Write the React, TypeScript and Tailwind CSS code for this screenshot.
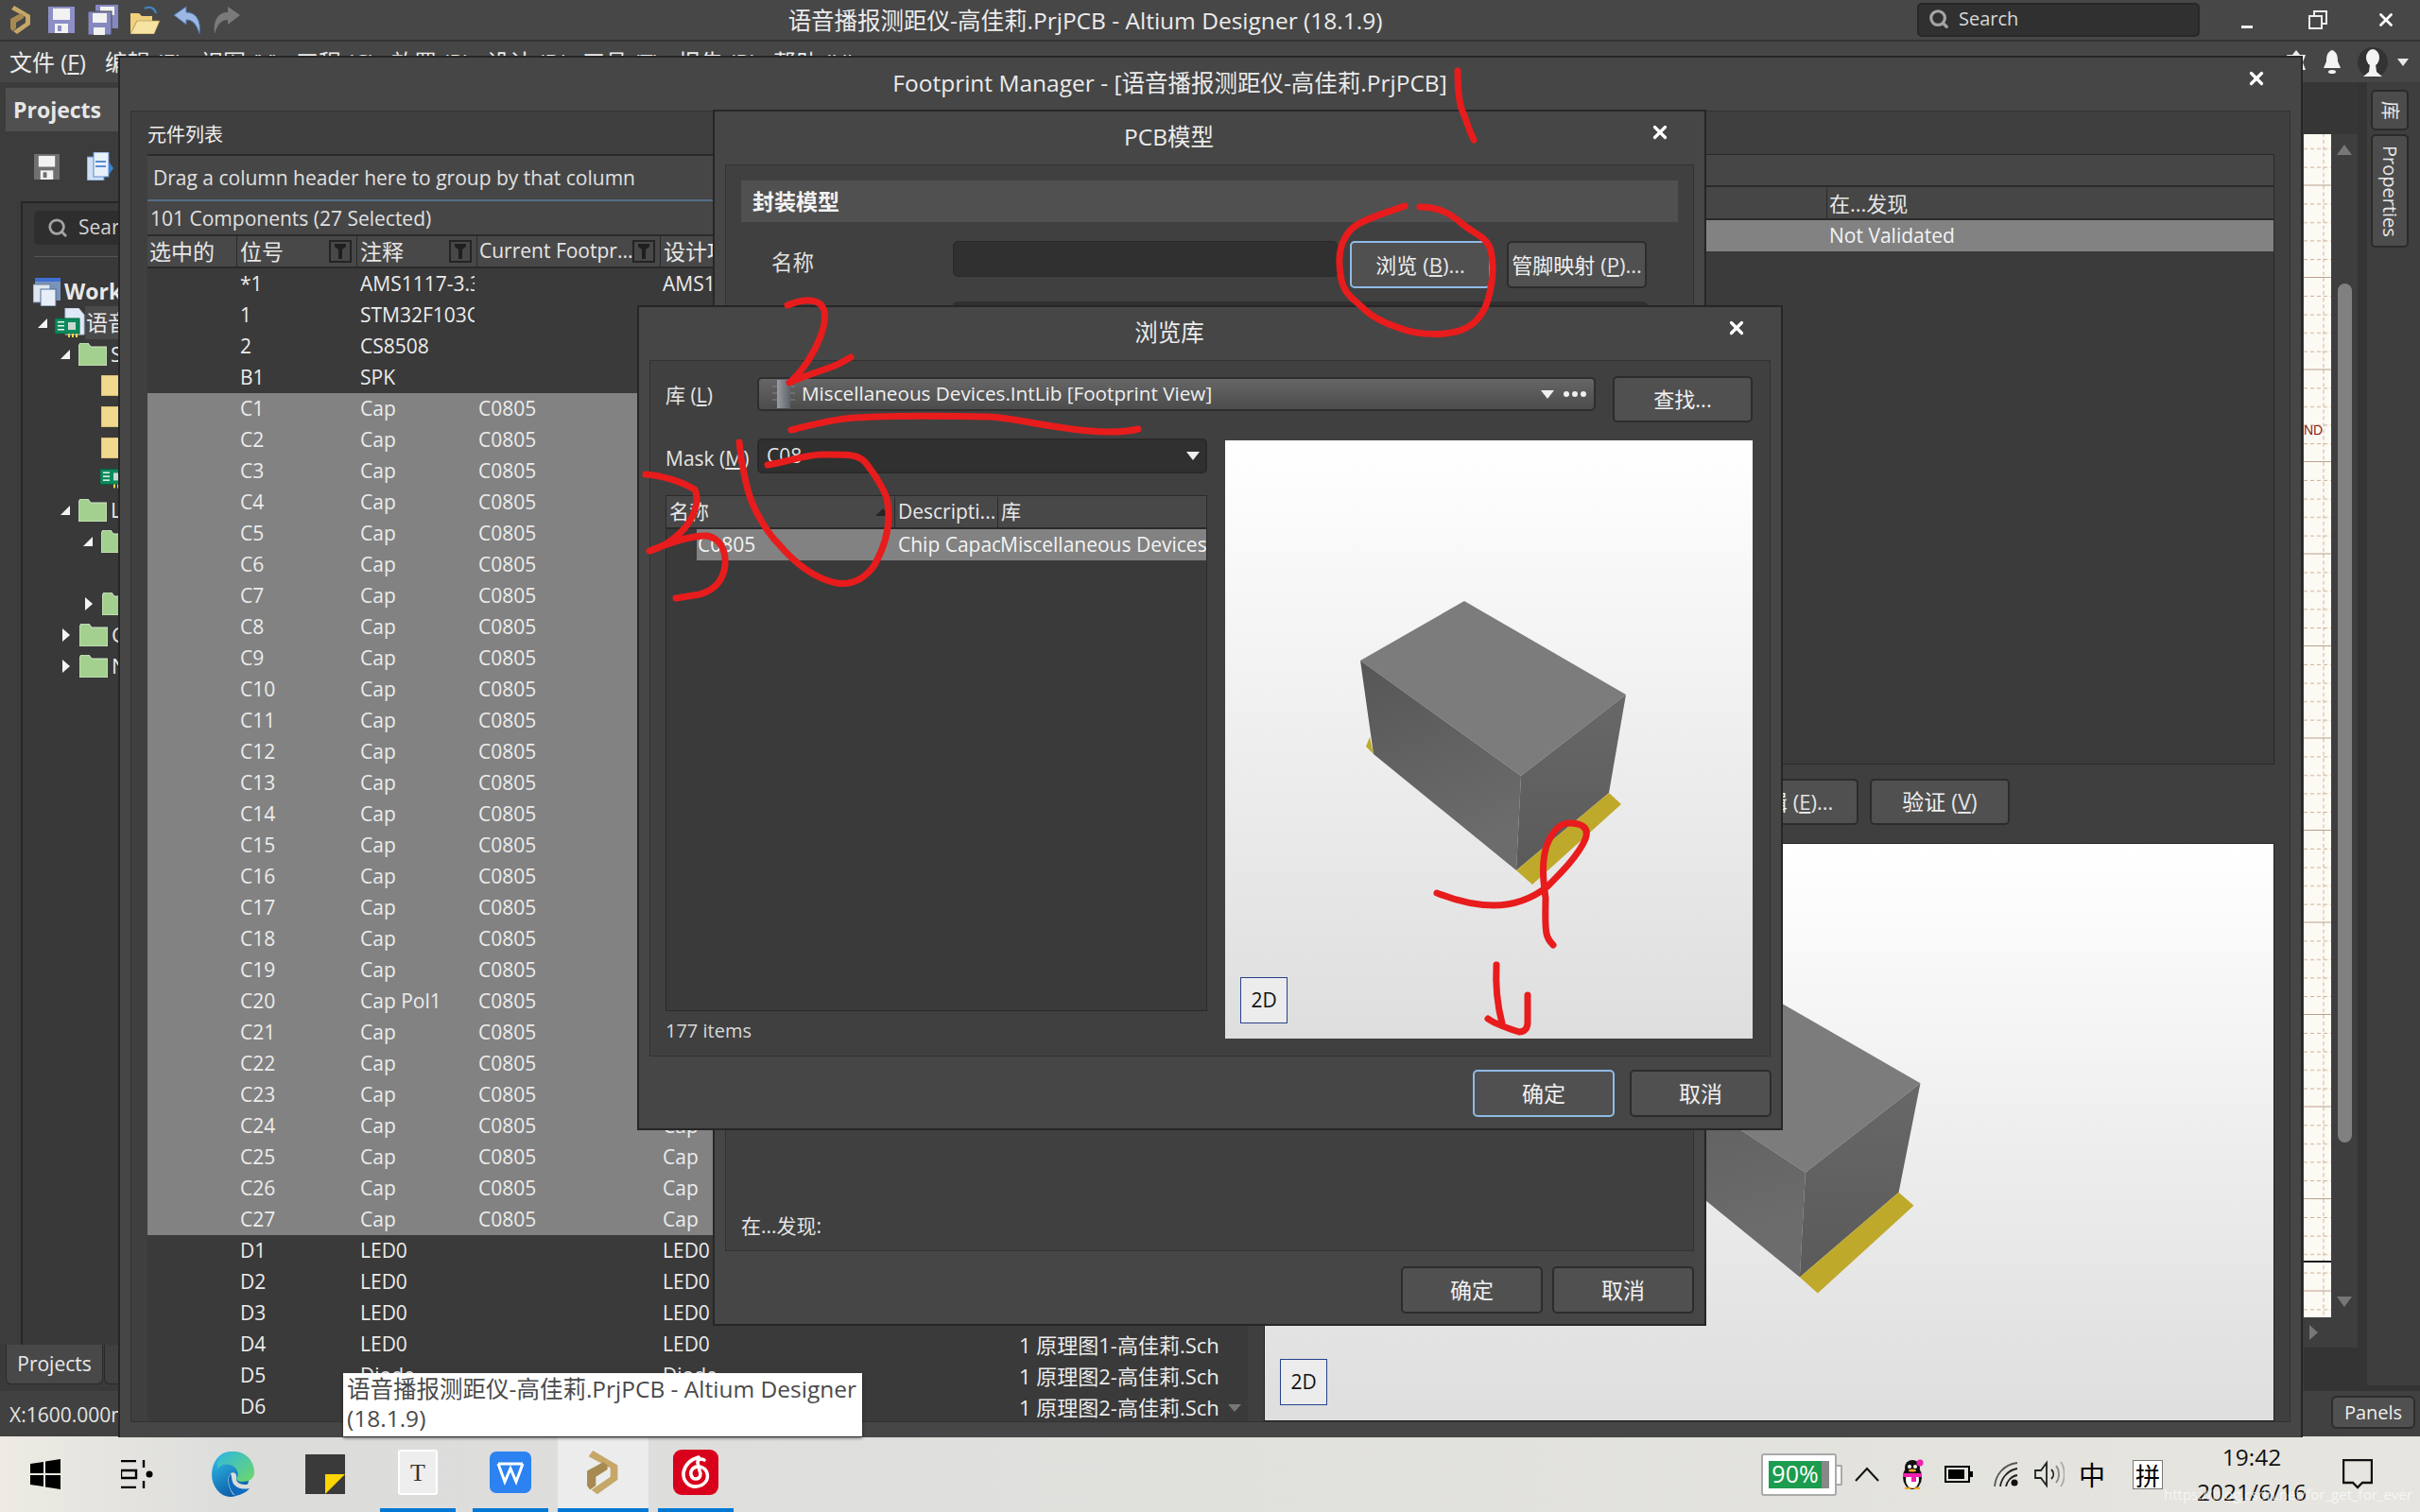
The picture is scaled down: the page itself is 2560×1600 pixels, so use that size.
import { Search, X } from "lucide-react";

type Row = { ref: string; comment: string; foot: string; design: string; sheet: string };

const sheet1 = "1 原理图1-高佳莉.Sch";
const sheet2 = "1 原理图2-高佳莉.Sch";

const rows: Row[] = [
  { ref: "*1", comment: "AMS1117-3.3", foot: "", design: "AMS1117", sheet: sheet1 },
  { ref: "1", comment: "STM32F103C8", foot: "", design: "", sheet: sheet1 },
  { ref: "2", comment: "CS8508", foot: "", design: "", sheet: sheet1 },
  { ref: "B1", comment: "SPK", foot: "", design: "", sheet: sheet1 },
  ...Array.from({ length: 27 }, (_, i) => ({
    ref: `C${i + 1}`,
    comment: i === 19 ? "Cap Pol1" : "Cap",
    foot: "C0805",
    design: "Cap",
    sheet: sheet1,
  })),
  { ref: "D1", comment: "LED0", foot: "", design: "LED0", sheet: sheet1 },
  { ref: "D2", comment: "LED0", foot: "", design: "LED0", sheet: sheet1 },
  { ref: "D3", comment: "LED0", foot: "", design: "LED0", sheet: sheet1 },
  { ref: "D4", comment: "LED0", foot: "", design: "LED0", sheet: sheet1 },
  { ref: "D5", comment: "Diode", foot: "", design: "Diode", sheet: sheet2 },
  { ref: "D6", comment: "Diode", foot: "", design: "Diode", sheet: sheet2 },
];

const menus = [
  ["文件", "F"],
  ["编辑", "E"],
  ["视图", "V"],
  ["工程", "C"],
  ["放置", "P"],
  ["设计", "D"],
  ["工具", "T"],
  ["报告", "R"],
  ["帮助", "H"],
];

function AltiumLogo({ size = 22 }: { size?: number }) {
  return (
    <svg width={size} height={size * 1.36} viewBox="0 0 22 30">
      <path d="M4 0 L21 10 L21 20 L7 30 L3 27 L16 18 L16 12 L1 4Z" fill="#c6a768" />
      <path d="M0 14 L11 8 L14 10 L14 13 L6 18 L6 24 L2 27 L0 24Z" fill="#a68a52" />
    </svg>
  );
}

function Floppy({ w = 28, color = "#8d8fc6" }: { w?: number; color?: string }) {
  return (
    <svg width={w} height={w} viewBox="0 0 28 28">
      <rect width="28" height="28" fill={color} />
      <rect x="5" y="2" width="18" height="12" fill="#f2f2f2" />
      <rect x="7" y="18" width="14" height="10" fill="#f2f2f2" />
      <rect x="10" y="20" width="4" height="6" fill={color} />
    </svg>
  );
}

function SaveAll() {
  return (
    <svg width="32" height="32" viewBox="0 0 32 32">
      <rect x="8" y="0" width="24" height="25" fill="#8688c0" />
      <rect x="13" y="2" width="15" height="9" fill="#f2f2f2" />
      <rect x="0" y="7" width="25" height="25" fill="#8688c0" stroke="#474747" />
      <rect x="5" y="9" width="15" height="10" fill="#f2f2f2" />
      <rect x="6" y="24" width="12" height="8" fill="#f2f2f2" />
    </svg>
  );
}

function Triangle({ open }: { open: boolean }) {
  return open ? (
    <svg width="10" height="10" viewBox="0 0 10 10" className="shrink-0">
      <polygon points="10,0 10,10 0,10" fill="#f4f4f4" />
    </svg>
  ) : (
    <svg width="8" height="14" viewBox="0 0 8 14" className="shrink-0 mx-px">
      <polygon points="0,0 8,7 0,14" fill="#f4f4f4" />
    </svg>
  );
}

function Folder() {
  return (
    <svg width="30" height="24" viewBox="0 0 30 24" className="shrink-0">
      <path d="M0 24 V3 L2 0 H10 L13 4 H30 V24Z" fill="#a3d08f" stroke="#d6e9cd" strokeWidth="1" />
    </svg>
  );
}

function YellowDoc() {
  return (
    <svg width="20" height="22" viewBox="0 0 20 22" className="shrink-0">
      <rect width="20" height="22" fill="#f0d98c" stroke="#c4a860" />
      <rect x="18" y="13" width="3" height="6" fill="#8a7a50" />
    </svg>
  );
}

function GreenBoard({ w = 26 }: { w?: number }) {
  return (
    <svg width={w} height={w * 0.8} viewBox="0 0 26 20" className="shrink-0">
      <rect width="26" height="16" fill="#0c8a5c" stroke="#04603e" />
      <rect x="3" y="3" width="7" height="1.5" fill="#e8f5ee" />
      <rect x="3" y="7" width="7" height="1.5" fill="#e8f5ee" />
      <rect x="3" y="11" width="7" height="1.5" fill="#e8f5ee" />
      <rect x="14" y="4" width="8" height="8" fill="#c9d9d2" />
      <rect x="14" y="16" width="2" height="4" fill="#e9d84c" />
      <rect x="18" y="16" width="2" height="4" fill="#e9d84c" />
      <rect x="22" y="16" width="2" height="4" fill="#e9d84c" />
    </svg>
  );
}

function PcbProject() {
  return (
    <svg width="32" height="32" viewBox="0 0 32 32" className="shrink-0">
      <path d="M11 0 H25 L31 7 V28 H11Z" fill="#dfe8f6" stroke="#b8c8de" />
      <rect y="11" width="26" height="16" fill="#0c8a5c" stroke="#04603e" />
      <rect x="3" y="14" width="7" height="1.5" fill="#e8f5ee" />
      <rect x="3" y="18" width="7" height="1.5" fill="#e8f5ee" />
      <rect x="3" y="22" width="7" height="1.5" fill="#e8f5ee" />
      <rect x="14" y="15" width="8" height="8" fill="#c9d9d2" />
      <rect x="14" y="27" width="2" height="4" fill="#e9d84c" />
      <rect x="18" y="27" width="2" height="4" fill="#e9d84c" />
      <rect x="22" y="27" width="2" height="4" fill="#e9d84c" />
    </svg>
  );
}

function ColumnFilter() {
  return (
    <span className="flex h-[24px] w-[24px] shrink-0 items-center justify-center border-2 border-[#242424]">
      <svg width="12" height="16" viewBox="0 0 12 16">
        <path d="M0 0 H12 V3 L8 6 V16 H4 V6 L0 3Z" fill="#1f1f1f" />
      </svg>
    </span>
  );
}

function Btn({ label, u, rest, focus, className }: { label: string; u?: string; rest?: string; focus?: boolean; className: string }) {
  return (
    <button
      className={`flex items-center justify-center rounded-[5px] border-2 bg-[#505050] text-[#f0f0f0] whitespace-nowrap ${
        focus ? "border-[#8fbbe6]" : "border-[#2c2c2c]"
      } ${className}`}
    >
      {label}
      {u && (
        <span className="ml-[6px] text-[#e4e4e4]">
          (<u>{u}</u>){rest}
        </span>
      )}
    </button>
  );
}

function DialogTitle({ text }: { text: string }) {
  return (
    <div className="relative flex h-[56px] shrink-0 items-center justify-center pb-[2px] pr-[86px] text-[24.5px] text-[#ebebeb]">
      {text}
      <X size={22} strokeWidth={3.5} className="absolute right-[36px] top-[11px] text-white" />
    </div>
  );
}

function Preview({ viewBox, big }: { viewBox: string; big?: boolean }) {
  return (
    <div className="relative h-full w-full bg-linear-to-b from-white to-[#dedede]">
      <svg className="h-full w-full" viewBox={viewBox}>
        <defs>
          <linearGradient id={big ? "l1" : "l2"} x1="0" y1="0" x2="0.3" y2="1">
            <stop offset="0" stopColor="#565656" />
            <stop offset="1" stopColor="#6c6c6c" />
          </linearGradient>
          <linearGradient id={big ? "r1" : "r2"} x1="0" y1="0" x2="0" y2="1">
            <stop offset="0" stopColor="#686868" />
            <stop offset="1" stopColor="#5a5a5a" />
          </linearGradient>
        </defs>
        {big ? (
          <>
            <polygon points="1780,1001 2032,1146 1910,1241 1640,1063" fill="#7c7c7c" />
            <polygon points="1640,1063 1910,1241 1904,1352 1660,1153" fill="url(#l1)" />
            <polygon points="1910,1241 2032,1146 2009,1262 1904,1352" fill="url(#r1)" />
            <polygon points="2009,1262 2025,1276 1923,1369 1904,1352" fill="#bfa92b" />
          </>
        ) : (
          <>
            <polygon points="1445,790 1453,798 1449,780" fill="#bfa92b" />
            <polygon points="1549,636 1720,735 1609,821 1439,699" fill="#7c7c7c" />
            <polygon points="1439,699 1609,821 1604,921 1453,798" fill="url(#l2)" />
            <polygon points="1609,821 1720,735 1702,839 1604,921" fill="url(#r2)" />
            <polygon points="1702,839 1715,851 1621,936 1604,921" fill="#bfa92b" />
          </>
        )}
      </svg>
      <span
        className={`absolute flex items-center justify-center border border-[#27408b] bg-[#ececec] text-[21px] text-[#111] ${
          big ? "bottom-[16px] left-[16px] h-[49px] w-[50px]" : "bottom-[16px] left-[16px] h-[49px] w-[50px]"
        }`}
      >
        2D
      </span>
    </div>
  );
}

function TitleBar() {
  return (
    <div className="flex h-[44px] shrink-0 items-center border-b-2 border-[#333] bg-[#474747]">
      <div className="flex w-[833px] shrink-0 items-center pl-[11px]">
        <AltiumLogo />
        <span className="ml-[18px]"><Floppy /></span>
        <span className="ml-[14px]"><SaveAll /></span>
        <svg width="32" height="30" viewBox="0 0 32 30" className="ml-[12px]">
          <path d="M1 30 V8 H10 L13 11 H24 V16 H8 L1 30Z" fill="#f0d07c" />
          <path d="M1 30 L8 16 H32 L26 30Z" fill="#f7e3a2" stroke="#a88a3f" strokeWidth="0.6" />
          <path d="M16 3 C22 0 27 3 28 8" fill="none" stroke="#3f86c5" strokeWidth="2" />
        </svg>
        <svg width="30" height="30" viewBox="0 0 30 30" className="ml-[14px]">
          <path d="M1 10 L14 1 V7 C24 7 30 15 28 30 C25 20 21 15 14 15 V20Z" fill="#9bb7e4" stroke="#4d73ae" strokeWidth="1" />
        </svg>
        <svg width="30" height="30" viewBox="0 0 30 30" className="ml-[12px]">
          <path d="M29 10 L16 1 V7 C6 7 0 15 2 30 C5 20 9 15 16 15 V20Z" fill="#7a7a7a" />
        </svg>
      </div>
      <div className="w-[630px] shrink-0 whitespace-nowrap pt-[2px] text-center text-[24.5px] text-[#ececec]">
        语音播报测距仪-高佳莉.PrjPCB - Altium Designer (18.1.9)
      </div>
      <div className="ml-auto flex h-[36px] w-[299px] items-center rounded-[5px] border-2 border-[#282828] bg-[#303030] pb-[2px] pl-[10px] text-[20px] text-[#d8d8d8]">
        <Search size={22} strokeWidth={3.5} className="text-[#a4a4a4]" />
        <span className="ml-[10px]">Search</span>
      </div>
      <div className="flex w-[100px] items-center justify-center pt-[14px]">
        <span className="h-[3px] w-[12px] bg-[#eee]" />
      </div>
      <div className="flex w-[50px] items-center justify-center">
        <svg width="20" height="20" viewBox="0 0 20 20" fill="none" stroke="#eee" strokeWidth="2">
          <rect x="1" y="6" width="13" height="13" />
          <path d="M6 6 V1 H19 V14 H14" />
        </svg>
      </div>
      <div className="flex w-[83px] items-center justify-center pl-[10px]">
        <X size={22} strokeWidth={3} className="text-white" />
      </div>
    </div>
  );
}

function MenuBar() {
  return (
    <div className="flex h-[43px] shrink-0 items-center bg-[#464646] pl-[10px] text-[24px] text-[#ececec]">
      {menus.map(([name, key]) => (
        <span key={name} className="w-[101px] shrink-0 whitespace-nowrap">
          {name} (<u>{key}</u>)
        </span>
      ))}
      <div className="ml-auto flex items-center pr-[12px]">
        <svg width="24" height="26" viewBox="0 0 24 26" fill="#eee">
          <path d="M12 0 L16 5 H22 L19 13 L22 21 H16 L12 26 L8 21 H2 L5 13 L2 5 H8Z" />
        </svg>
        <svg width="22" height="26" viewBox="0 0 22 26" fill="#f4f4f4" className="ml-[15px]">
          <path d="M11 0 C16 2 17 6 17 12 L20 19 H2 L5 12 C5 6 6 2 11 0Z" />
          <ellipse cx="11" cy="23" rx="4" ry="2" />
        </svg>
        <svg width="32" height="32" viewBox="0 0 32 32" className="ml-[16px]">
          <ellipse cx="16" cy="16" rx="16" ry="16" fill="#333" />
          <ellipse cx="16" cy="11" rx="7" ry="9" fill="#f4f4f4" />
          <path d="M13 18 H19 L20 26 L26 31 H6 L12 26Z" fill="#f4f4f4" />
        </svg>
        <svg width="12" height="8" viewBox="0 0 12 8" className="ml-[10px]">
          <polygon points="0,0 12,0 6,8" fill="#e8e8e8" />
        </svg>
      </div>
    </div>
  );
}

const tree = [
  { cls: "pl-[11px]", kind: "ws" },
  { cls: "pl-[16px]", kind: "pcb" },
  { cls: "pl-[40px]", kind: "folder", open: true, text: "Source Documents" },
  { cls: "pl-[83px]", kind: "doc" },
  { cls: "pl-[83px]", kind: "doc" },
  { cls: "pl-[83px]", kind: "doc" },
  { cls: "pl-[82px]", kind: "board" },
  { cls: "pl-[40px]", kind: "folder", open: true, text: "Libraries" },
  { cls: "pl-[64px]", kind: "folder", open: true, text: "" },
  { cls: "", kind: "none" },
  { cls: "pl-[65px]", kind: "folder", open: false, text: "" },
  { cls: "pl-[41px]", kind: "folder", open: false, text: "Components" },
  { cls: "pl-[41px]", kind: "folder", open: false, text: "Nets" },
];

function LeftPanel() {
  return (
    <div className="flex w-[130px] shrink-0 flex-col overflow-hidden bg-[#3c3c3c] pt-[6px]">
      <div className="ml-[6px] flex h-[46px] shrink-0 items-center bg-[#505050] pl-[8px] text-[23px] font-bold text-[#e6e6e6]">
        Projects
      </div>
      <div className="flex h-[74px] shrink-0 items-center gap-[29px] pl-[36px]">
        <Floppy w={27} color="#6f6f6f" />
        <svg width="28" height="30" viewBox="0 0 28 30">
          <rect x="0" y="5" width="18" height="25" fill="#cfe0f4" stroke="#5a8ccc" />
          <rect x="7" y="0" width="16" height="26" fill="#e8f0fa" stroke="#5a8ccc" />
          <rect x="9" y="9" width="11" height="2" fill="#5a8ccc" />
          <rect x="9" y="14" width="11" height="2" fill="#5a8ccc" />
          <polygon points="23,10 28,17 23,24" fill="#3b82d6" />
        </svg>
      </div>
      <div className="ml-[22px] flex min-h-0 flex-1 flex-col border-l-2 border-t-2 border-[#262626] bg-[#393939] pt-[8px]">
        <div className="ml-[12px] flex h-[36px] w-[120px] shrink-0 items-center rounded-[5px] bg-[#2e2e2e] pl-[14px] text-[21px] text-[#d4d4d4]">
          <Search size={22} strokeWidth={3} className="shrink-0 text-[#a4a4a4]" />
          <span className="ml-[11px]">Search</span>
        </div>
        <div className="ml-[12px] mt-[12px] h-px shrink-0 bg-[#555]" />
        <div className="mt-[20px] flex flex-col text-[#e8e8e8]">
          {tree.map((t, i) => (
            <div key={i} className={`flex h-[33px] items-center whitespace-nowrap text-[22px] ${t.cls}`}>
              {t.kind === "ws" && (
                <>
                  <svg width="30" height="30" viewBox="0 0 30 30" className="shrink-0">
                    <rect x="2" y="0" width="27" height="24" fill="#7a93b8" />
                    <rect x="2" y="0" width="27" height="4" fill="#3f6fd1" />
                    <rect x="0" y="7" width="18" height="19" fill="#dfe6f0" stroke="#6c7f9c" />
                    <rect x="8" y="12" width="16" height="18" fill="#e8eef7" stroke="#506e98" />
                  </svg>
                  <span className="ml-[3px] text-[23px] font-bold">Workspace1</span>
                </>
              )}
              {t.kind === "pcb" && (
                <>
                  <Triangle open />
                  <span className="ml-[8px]"><PcbProject /></span>
                  <span className="bg-[#4a4a4a] pl-[1px] text-[23px]">语音播报测距仪</span>
                </>
              )}
              {t.kind === "folder" && (
                <>
                  <Triangle open={!!t.open} />
                  <span className="ml-[9px]"><Folder /></span>
                  <span className="ml-[4px]">{t.text}</span>
                </>
              )}
              {t.kind === "doc" && <YellowDoc />}
              {t.kind === "board" && <GreenBoard />}
            </div>
          ))}
        </div>
        <div className="flex-1" />
      </div>
      <div className="flex h-[49px] shrink-0 items-start bg-[#3a3a3a] pl-[6px]">
        <span className="flex h-[42px] w-[103px] items-center justify-center rounded-b-[6px] border border-t-0 border-[#2a2a2a] bg-[#484848] text-[21px] text-[#e8e8e8]">
          Projects
        </span>
        <span className="ml-px h-[42px] w-[20px] rounded-b-[6px] border border-t-0 border-[#2a2a2a] bg-[#404040]" />
      </div>
    </div>
  );
}

function RightDock() {
  return (
    <div className="flex w-[123px] shrink-0 bg-[#343434]">
      <div className="flex w-[57px] shrink-0 flex-col">
        <div className="h-[55px] shrink-0 bg-[#363636]" />
        <div className="flex h-[1252px] shrink-0">
          <svg width="29" height="1252" className="shrink-0">
            <defs>
              <pattern id="grid" width="97.5" height="97.5" patternUnits="userSpaceOnUse" y="-43">
                <path d="M0 97 H29" stroke="#b8a08e" strokeWidth="1" />
                <path d="M0 19.5 H29 M0 39 H29 M0 58.5 H29 M0 78 H29" stroke="#c8b09c" strokeWidth="1" strokeDasharray="4 3" />
                <path d="M21 0 V97.5" stroke="#c8b09c" strokeWidth="1" strokeDasharray="4 3" />
              </pattern>
            </defs>
            <rect width="29" height="1252" fill="#fdfaf3" />
            <rect width="29" height="1252" fill="url(#grid)" />
            <path d="M0 1193 H29" stroke="#1a1a1a" strokeWidth="2" />
            <text x="0" y="318" fontSize="14" fill="#8a1c1c" fontFamily="Liberation Sans">ND</text>
          </svg>
          <div className="flex w-[28px] shrink-0 flex-col items-center bg-[#3e3e3e] pt-[11px]">
            <svg width="16" height="11" viewBox="0 0 16 11">
              <polygon points="8,0 16,11 0,11" fill="#777" />
            </svg>
            <div className="mt-[136px] h-[909px] w-[15px] rounded-full bg-[#808080]" />
            <svg width="16" height="11" viewBox="0 0 16 11" className="mt-[163px]">
              <polygon points="0,0 16,0 8,11" fill="#777" />
            </svg>
          </div>
        </div>
        <div className="flex h-[32px] shrink-0 items-center bg-[#3e3e3e] pl-[6px]">
          <svg width="9" height="16" viewBox="0 0 9 16">
            <polygon points="0,0 9,8 0,16" fill="#777" />
          </svg>
        </div>
      </div>
      <div className="ml-[10px] mb-[6px] flex w-[56px] shrink-0 flex-col bg-[#3e3e3e] pl-[4px] pt-[8px] text-[20px] text-[#e8e8e8]">
        <div className="flex h-[43px] w-[40px] items-center justify-center rounded-[5px] border-2 border-[#2a2a2a] bg-[#4c4c4c]">
          <span className="rotate-90">库</span>
        </div>
        <div className="mt-[4px] flex h-[120px] w-[40px] items-center justify-center rounded-[5px] border-2 border-[#2a2a2a] bg-[#4c4c4c] [writing-mode:vertical-rl]">
          Properties
        </div>
      </div>
    </div>
  );
}

function FootprintManager() {
  return (
    <div className="absolute left-[125px] top-[59px] flex h-[1462px] w-[2311px] flex-col border-2 border-b-0 border-[#262626] bg-[#464646]">
      <DialogTitle text="Footprint Manager - [语音播报测距仪-高佳莉.PrjPCB]" />
      <div className="mx-[11px] mb-[16px] flex min-h-0 flex-1 gap-[17px] border border-[#323232] bg-[#3f3f3f] px-[17px]">
        <div className="flex w-[1164px] shrink-0 flex-col overflow-hidden">
          <div className="flex h-[45px] shrink-0 items-center pt-[5px] text-[20px] text-[#f0f0f0]">元件列表</div>
          <div className="flex h-[50px] shrink-0 items-center border-y-2 border-t-[#2a2a2a] border-b-[#566e88] bg-[#464646] pl-[6px] pt-[2px] text-[21px] text-[#e0e0e0]">
            Drag a column header here to group by that column
          </div>
          <div className="flex h-[35px] shrink-0 items-center bg-[#464646] pl-[3px] pt-[2px] text-[21px] text-[#e0e0e0]">
            101 Components (27 Selected)
          </div>
          <div className="flex h-[36px] shrink-0 items-center border-y-2 border-[#2a2a2a] bg-[#484848] text-[23px] text-[#e6e6e6]">
            <span className="w-[94px] pl-[2px]">选中的</span>
            <span className="flex w-[127px] items-center justify-between border-l border-[#2a2a2a] pl-[3px] pr-[5px]">位号<ColumnFilter /></span>
            <span className="flex w-[127px] items-center justify-between border-l border-[#2a2a2a] pl-[3px] pr-[5px]">注释<ColumnFilter /></span>
            <span className="flex w-[194px] items-center justify-between whitespace-nowrap border-l border-[#2a2a2a] pl-[2px] pr-[5px] text-[21px]">Current Footpr...<ColumnFilter /></span>
            <span className="border-l border-[#2a2a2a] pl-[3px]">设计项目标识</span>
          </div>
          <div className="relative min-h-0 flex-1 overflow-hidden bg-[#3a3a3a]">
            {rows.map((r, i) => (
              <div
                key={r.ref}
                className={`flex h-[33px] items-center whitespace-nowrap pt-px text-[21px] text-[#ececec] ${
                  i >= 4 && i < 31 ? "bg-[#828282]" : ""
                }`}
              >
                <span className="w-[98px] shrink-0" />
                <span className="w-[127px] shrink-0">{r.ref}</span>
                <span className="mr-[4px] w-[121px] shrink-0 overflow-hidden">{r.comment}</span>
                <span className="w-[195px] shrink-0">{r.foot}</span>
                <span className="w-[377px] shrink-0">{r.design}</span>
                <span className="text-[22px]">{r.sheet}</span>
              </div>
            ))}
            <svg width="14" height="8" viewBox="0 0 14 8" className="absolute bottom-[10px] right-[7px]">
              <polygon points="0,0 14,0 7,8" fill="#777" />
            </svg>
          </div>
        </div>
        <div className="flex w-[1069px] shrink-0 flex-col pt-[45px]">
          <div className="h-[646px] shrink-0 border border-[#2a2a2a] bg-[#3b3b3b]">
            <div className="h-[34px] border-b-2 border-[#2a2a2a] bg-[#464646]" />
            <div className="flex h-[35px] items-center border-b-2 border-[#2a2a2a] bg-[#464646] pl-[594px] pt-px text-[22px] text-[#e6e6e6]">
              <span className="border-l border-[#2a2a2a] pl-[2px]">在...发现</span>
            </div>
            <div className="flex h-[33px] items-center bg-[#828282] pl-[597px] pt-px text-[21px] text-[#f4f4f4]">Not Validated</div>
          </div>
          <div className="mt-[15px] flex h-[49px] shrink-0 gap-[12px] pl-[483px]">
            <Btn label="编辑" u="E" rest="..." className="w-[146px] text-[22px]" />
            <Btn label="验证" u="V" className="w-[148px] text-[23px]" />
          </div>
          <div className="mt-[19px] min-h-0 flex-1 border border-[#222]">
            <Preview viewBox="1337 892 1069 612" big />
          </div>
        </div>
      </div>
    </div>
  );
}

function PcbModelDialog() {
  return (
    <div className="absolute left-[754px] top-[116px] flex h-[1287px] w-[1051px] flex-col border-2 border-[#262626] bg-[#464646]">
      <DialogTitle text="PCB模型" />
      <div className="mx-[11px] flex h-[1150px] shrink-0 flex-col border border-[#323232] bg-[#404040] px-[16px] pt-[16px]">
        <div className="flex h-[44px] shrink-0 items-center bg-[#505050] pl-[12px] text-[23px] font-bold text-[#f2f2f2]">封装模型</div>
        <div className="mt-[20px] flex h-[50px] shrink-0 items-start">
          <span className="flex h-[46px] w-[224px] shrink-0 items-center pl-[32px] text-[22.5px] text-[#e0e0e0]">名称</span>
          <span className="h-[38px] w-[407px] shrink-0 rounded-[5px] border border-[#2a2a2a] bg-[#303030]" />
          <Btn label="浏览" u="B" rest="..." focus className="ml-[13px] h-[50px] w-[149px] shrink-0 text-[22px]" />
          <Btn label="管脚映射" u="P" rest="..." className="ml-[17px] h-[50px] w-[148px] shrink-0 text-[22px]" />
        </div>
        <div className="ml-[224px] mt-[14px] h-[38px] w-[735px] shrink-0 rounded-[5px] bg-[#303030]" />
        <div className="flex-1" />
        <div className="pb-[10px] text-[21px] text-[#e4e4e4]">在...发现:</div>
      </div>
      <div className="mt-[16px] flex justify-end gap-[10px] pr-[11px]">
        <Btn label="确定" className="h-[50px] w-[150px] text-[23px]" />
        <Btn label="取消" className="h-[50px] w-[150px] text-[23px]" />
      </div>
    </div>
  );
}

function BrowseDialog() {
  return (
    <div className="absolute left-[674px] top-[323px] flex h-[873px] w-[1212px] flex-col border-2 border-[#262626] bg-[#464646]">
      <DialogTitle text="浏览库" />
      <div className="mx-[11px] flex h-[737px] shrink-0 flex-col border border-[#323232] bg-[#404040] pl-[16px] pr-[17px] pt-[16px]">
        <div className="flex h-[49px] shrink-0 text-[21px] text-[#e4e4e4]">
          <span className="flex h-[42px] w-[97px] shrink-0 items-center">库 (<u>L</u>)</span>
          <div className="mt-px flex h-[36px] w-[887px] shrink-0 items-center rounded-[5px] border-2 border-[#2e2e2e] bg-linear-to-b from-[#666] to-[#4c4c4c] pl-[14px] pr-[8px]">
            <svg width="24" height="32" viewBox="0 0 24 32" className="shrink-0">
              <defs>
                <linearGradient id="chip" x1="0" y1="0" x2="1" y2="0">
                  <stop offset="0" stopColor="#9a9ca2" />
                  <stop offset="1" stopColor="#5f616a" />
                </linearGradient>
              </defs>
              <rect x="5" y="1" width="14" height="30" fill="url(#chip)" />
              <path d="M0 8 H5 M0 15 H5 M0 22 H5 M19 8 H24 M19 15 H24 M19 22 H24" stroke="#777" strokeWidth="1.5" />
            </svg>
            <span className="ml-[7px] whitespace-nowrap text-[20.7px] text-[#f0f0f0]">Miscellaneous Devices.IntLib [Footprint View]</span>
            <svg width="14" height="9" viewBox="0 0 14 9" className="ml-auto shrink-0">
              <polygon points="0,0 14,0 7,9" fill="#f0f0f0" />
            </svg>
            <span className="ml-[10px] flex gap-[3px]">
              <i className="h-[6px] w-[6px] rounded-full bg-[#f0f0f0]" />
              <i className="h-[6px] w-[6px] rounded-full bg-[#f0f0f0]" />
              <i className="h-[6px] w-[6px] rounded-full bg-[#f0f0f0]" />
            </span>
          </div>
          <Btn label="查找..." className="ml-[18px] h-[49px] w-[148px] shrink-0 text-[22px]" />
        </div>
        <div className="mt-[17px] flex gap-[19px]">
          <div className="flex w-[573px] shrink-0 flex-col">
            <div className="flex h-[37px] shrink-0 items-center text-[21px] text-[#e4e4e4]">
              <span className="w-[97px] shrink-0 whitespace-nowrap pt-[7px]">Mask (<u>M</u>)</span>
              <div className="flex h-[37px] flex-1 items-center rounded-[5px] border-2 border-[#2a2a2a] bg-[#303030] pl-[8px] pr-[6px]">
                <span>C08</span>
                <svg width="14" height="9" viewBox="0 0 14 9" className="ml-auto">
                  <polygon points="0,0 14,0 7,9" fill="#f0f0f0" />
                </svg>
              </div>
            </div>
            <div className="mt-[23px] h-[546px] border border-[#2a2a2a] bg-[#3a3a3a] text-[21px] text-[#e8e8e8]">
              <div className="flex h-[35px] items-center border-b-2 border-[#2a2a2a] bg-[#484848] pt-px">
                <span className="flex w-[241px] shrink-0 items-center justify-between pl-[3px] pr-[4px]">
                  名称
                  <svg width="16" height="8" viewBox="0 0 16 8"><polygon points="8,0 16,8 0,8" fill="#262626" /></svg>
                </span>
                <span className="w-[109px] shrink-0 whitespace-nowrap border-l border-[#2a2a2a] pl-[3px]">Descripti...</span>
                <span className="border-l border-[#2a2a2a] pl-[3px]">库</span>
              </div>
              <div className="ml-[32px] flex h-[33px] items-center whitespace-nowrap bg-[#828282] pt-px text-[#f4f4f4]">
                <span className="w-[209px] shrink-0 pl-px">C0805</span>
                <span className="w-[112px] shrink-0 overflow-hidden pl-[4px]">Chip Capacitor</span>
                <span className="overflow-hidden">Miscellaneous Devices</span>
              </div>
            </div>
            <div className="mt-[6px] text-[20px] text-[#d8d8d8]">177 items</div>
          </div>
          <div className="mt-[2px] h-[633px] w-[558px] shrink-0">
            <Preview viewBox="1296 466 558 633" />
          </div>
        </div>
      </div>
      <div className="mt-[14px] flex justify-end gap-[16px] pr-[10px]">
        <Btn label="确定" focus className="h-[50px] w-[150px] text-[23px]" />
        <Btn label="取消" className="h-[50px] w-[150px] text-[23px]" />
      </div>
    </div>
  );
}

function Taskbar() {
  return (
    <div className="flex h-[80px] shrink-0 bg-linear-to-r from-[#edebe3] via-[#dcdcdb] via-10% to-[#e6e5df] text-black">
      <div className="flex h-full w-[96px] items-center justify-center">
        <svg width="32" height="32" viewBox="0 0 32 32" fill="#000">
          <path d="M0 5 L14 3 V15 H0Z M16 2.6 L32 0 V15 H16Z M0 17 H14 V29 L0 27Z M16 17 H32 V32 L16 29.4Z" />
        </svg>
      </div>
      <div className="flex h-full w-[94px] items-center justify-center pl-[4px]">
        <svg width="34" height="30" viewBox="0 0 34 30" fill="none" stroke="#000" strokeWidth="2.4">
          <path d="M0 1 H16 M24 0 V8 M24 22 V30 M0 29 H16 M0 11 H16 V19 H0Z" />
          <circle cx="30" cy="15" r="3.5" fill="#000" stroke="none" />
        </svg>
      </div>
      <div className="ml-[9px] flex h-full w-[94px] items-center justify-center">
        <svg width="48" height="48" viewBox="0 0 48 48">
          <defs>
            <linearGradient id="edgeA" x1="0" y1="0" x2="0.5" y2="1">
              <stop offset="0" stopColor="#34c6ee" />
              <stop offset="1" stopColor="#0b5da8" />
            </linearGradient>
            <linearGradient id="edgeB" x1="0" y1="0" x2="1" y2="1">
              <stop offset="0" stopColor="#2fb6e0" />
              <stop offset="1" stopColor="#6fd968" />
            </linearGradient>
          </defs>
          <ellipse cx="22" cy="24" rx="20" ry="24" fill="url(#edgeA)" />
          <path d="M8 12 C12 2 20 0 26 0 C38 0 47 10 47 22 C47 29 41 32 34 32 C29 32 27 30 29 27 C31 24 29 16 21 14 C15 13 10 15 8 19Z" fill="url(#edgeB)" />
          <path d="M22 23 C26 21 29 24 28 28 C27 33 34 37 44 34 C40 43 31 47 25 46 C20 40 17 28 22 23Z" fill="#dcdcdb" />
          <path d="M22 23 C18 28 20 40 26 46 C31 47 38 44 42 39 C34 41 26 38 24 32 C23 29 23 26 22 23Z" fill="#0f6cbd" />
        </svg>
      </div>
      <div className="ml-[4px] flex h-full w-[94px] items-center justify-center">
        <svg width="42" height="42" viewBox="0 0 42 42">
          <rect width="42" height="42" fill="#3a3a3a" />
          <polygon points="21,21 42,21 21,42" fill="#ffd500" />
        </svg>
      </div>
      <div className="ml-[11px] flex h-full w-[80px] items-center justify-center border-b-4 border-[#0078d4]">
        <span className="flex h-[48px] w-[42px] items-center justify-center rounded-[3px] border-2 border-white bg-[#eeeeee] font-['Liberation_Serif',serif] text-[26px] text-[#333]">T</span>
      </div>
      <div className="ml-[18px] flex h-full w-[80px] items-center justify-center border-b-4 border-[#0078d4]">
        <svg width="44" height="44" viewBox="0 0 44 44">
          <rect width="44" height="44" rx="7" fill="#2c82f0" />
          <path d="M9 13 L16 32 L22 18 L28 32 L35 13 M9 13 H35" fill="none" stroke="#fff" strokeWidth="3" />
        </svg>
      </div>
      <div className="ml-[10px] flex h-full w-[96px] items-center justify-center border-b-4 border-[#0078d4] bg-[#ececec]">
        <AltiumLogo size={34} />
      </div>
      <div className="ml-[10px] flex h-full w-[80px] items-center justify-center border-b-4 border-[#0078d4]">
        <svg width="48" height="48" viewBox="0 0 48 48">
          <rect width="48" height="48" rx="9" fill="#d9001b" />
          <path d="M27 8 C20 10 13 15 11 24 C10 33 17 40 25 39 C33 38 38 32 36 25 C34 18 26 16 21 20 C17 24 19 31 24 31 C29 31 30 26 28 22 L26 14 C26 10 29 9 33 11" fill="none" stroke="#fff" strokeWidth="3.6" strokeLinecap="round" />
        </svg>
      </div>
      <div className="ml-auto flex h-full items-center pr-[28px]">
        <div className="relative flex h-[45px] w-[80px] items-center rounded-[3px] border-2 border-[#aaa] bg-white p-[6px]">
          <div className="flex h-full flex-1 items-center justify-center bg-[#1b9c4e] text-[25px] text-white">90%</div>
          <div className="h-full w-[8px] bg-[#888]" />
          <span className="absolute -right-[8px] top-[10px] h-[22px] w-[6px] rounded-r-[2px] border-2 border-l-0 border-[#aaa] bg-white" />
        </div>
        <div className="ml-[6px] flex w-[51px] justify-center">
          <svg width="26" height="16" viewBox="0 0 26 16" fill="none" stroke="#111" strokeWidth="2">
            <path d="M1 15 L13 2 L25 15" />
          </svg>
        </div>
        <div className="flex w-[46px] justify-center">
          <svg width="26" height="32" viewBox="0 0 26 32">
            <ellipse cx="13" cy="19" rx="10" ry="13" fill="#111" />
            <ellipse cx="13" cy="22" rx="7" ry="9" fill="#fff" />
            <ellipse cx="13" cy="9" rx="8" ry="8" fill="#111" />
            <circle cx="10" cy="8" r="2" fill="#fff" />
            <circle cx="16" cy="8" r="2" fill="#fff" />
            <ellipse cx="13" cy="12" rx="4" ry="1.6" fill="#f5a623" />
            <path d="M3 15 H23 V19 H17 V24 H12 V19 H3Z" fill="#f01fb0" />
            <circle cx="21" cy="4" r="3.5" fill="#f01fb0" />
            <ellipse cx="8" cy="31" rx="3.5" ry="1.2" fill="#f5a623" />
            <ellipse cx="18" cy="31" rx="3.5" ry="1.2" fill="#f5a623" />
          </svg>
        </div>
        <div className="flex w-[52px] justify-center">
          <svg width="30" height="18" viewBox="0 0 30 18">
            <rect x="1" y="1" width="25" height="16" fill="none" stroke="#000" strokeWidth="2" />
            <rect x="4" y="4" width="17" height="10" fill="#000" />
            <rect x="27" y="6" width="3" height="6" fill="#000" />
          </svg>
        </div>
        <div className="flex w-[48px] justify-center">
          <svg width="26" height="26" viewBox="0 0 26 26" fill="none" stroke="#222" strokeWidth="1.8">
            <path d="M1 26 C2 14 10 3 25 1" stroke="#555" />
            <path d="M7 26 C8 18 14 9 25 7" />
            <path d="M13 26 C14 21 18 15 25 14" />
            <circle cx="22" cy="22" r="3.5" fill="#111" stroke="none" />
          </svg>
        </div>
        <div className="flex w-[44px] justify-center">
          <svg width="32" height="30" viewBox="0 0 32 30" fill="none" stroke="#222" strokeWidth="1.8">
            <path d="M1 11 H7 L13 3 V27 L7 19 H1Z" />
            <path d="M18 10 C21 13 21 17 18 20" />
            <path d="M23 6 C27 11 27 19 23 24" stroke="#888" />
            <path d="M28 2 C33 9 33 21 28 28" stroke="#aaa" />
          </svg>
        </div>
        <div className="flex w-[46px] justify-center text-[28px] font-['Noto_Sans_CJK_SC',sans-serif]">中</div>
        <div className="flex w-[72px] justify-center">
          <span className="flex h-[31px] w-[32px] items-center justify-center border border-[#777] bg-white text-[26px] font-['Noto_Sans_CJK_SC',sans-serif]">拼</span>
        </div>
        <div className="flex w-[148px] flex-col items-center text-[24.5px] leading-[37px] text-[#111]">
          <span>19:42</span>
          <span>2021/6/16</span>
        </div>
        <div className="flex w-[76px] justify-center">
          <svg width="32" height="32" viewBox="0 0 32 32" fill="none" stroke="#111" strokeWidth="2.4">
            <path d="M1 1 H31 V25 H21 L16 30 L11 25 H1Z" />
          </svg>
        </div>
      </div>
    </div>
  );
}

function Annotations() {
  return (
    <svg className="pointer-events-none absolute left-0 top-0" width="2560" height="1600" fill="none" stroke="#e81c1c" strokeWidth="7" strokeLinecap="round" strokeLinejoin="round">
      <path d="M1542 75 C1542 95 1543 110 1548 120 C1552 130 1555 140 1559 148" />
      <path d="M1502 219 C1520 219 1532 224 1547 237 C1560 248 1573 250 1577 265 C1582 285 1577 310 1572 323 C1565 340 1553 348 1540 351 C1520 356 1495 353 1480 347 C1465 342 1450 334 1443 327 C1430 315 1420 310 1418 290 C1414 265 1422 250 1430 242 C1440 232 1470 224 1486 218" />
      <path d="M833 323 C845 318 860 315 868 322 C876 330 872 345 868 356 C862 372 850 392 835 405 C850 398 870 392 883 387 C890 384 895 381 900 378" />
      <path d="M837 455 C860 449 885 443 905 442 C950 439 1000 440 1045 441 C1070 442 1090 448 1120 452 C1145 456 1180 460 1204 454" />
      <path d="M782 468 C784 490 787 505 793 525 C800 545 813 565 823 575 C840 595 860 612 885 617 C905 620 918 608 925 598 C938 575 943 550 938 527 C932 510 923 500 916 490 C908 480 895 481 870 481 C850 481 830 490 812 492" />
      <path d="M683 502 C700 503 722 510 735 518 C741 530 733 548 725 558 C715 570 700 580 687 583 C700 578 728 566 748 567 C762 570 768 582 767 598 C765 615 755 625 740 629 L715 633" />
      <path d="M1520 945 C1545 955 1565 958 1580 958 C1605 958 1622 950 1637 938 C1650 925 1670 905 1677 888 C1682 875 1672 871 1660 871 C1648 871 1640 885 1636 895 C1630 915 1633 935 1635 950 C1635 965 1634 978 1636 988 C1637 993 1640 997 1643 1000" />
      <path d="M1583 1021 C1582 1040 1583 1060 1589 1083 M1574 1078 C1582 1084 1595 1088 1607 1092 C1613 1092 1616 1088 1616 1082 L1616 1053" />
    </svg>
  );
}

export default function App() {
  return (
    <div className="relative flex h-[1600px] w-[2560px] flex-col overflow-hidden bg-[#3a3a3a] font-['Open_Sans','Noto_Sans_CJK_SC',sans-serif]">
      <TitleBar />
      <MenuBar />
      <div className="flex h-[1385px] shrink-0">
        <LeftPanel />
        <div className="flex-1 bg-[#3a3a3a]" />
        <RightDock />
      </div>
      <div className="flex h-[48px] shrink-0 justify-between bg-[#414141] pl-[10px] pr-[5px]">
        <span className="pt-[10px] text-[21px] text-[#e4e4e4]">X:1600.000mm</span>
        <span className="mt-[5px] flex h-[35px] w-[89px] items-center justify-center rounded-[6px] border-2 border-[#2c2c2c] bg-[#505050] text-[20px] text-[#eee]">Panels</span>
      </div>
      <Taskbar />

      <FootprintManager />
      <PcbModelDialog />
      <BrowseDialog />

      <div className="absolute left-[363px] top-[1453px] h-[67px] w-[549px] bg-white pl-[4px] pt-px text-[24.5px] leading-[31px] text-[#4a4a4a] shadow-[0_2px_3px_rgba(0,0,0,0.5)]">
        语音播报测距仪-高佳莉.PrjPCB - Altium Designer
        <br />
        (18.1.9)
      </div>
      <span className="absolute left-[2289px] top-[1570px] whitespace-nowrap text-[15px] text-white/70">https://blog.csdn.net/for_get_for_ever</span>
      <Annotations />
    </div>
  );
}
